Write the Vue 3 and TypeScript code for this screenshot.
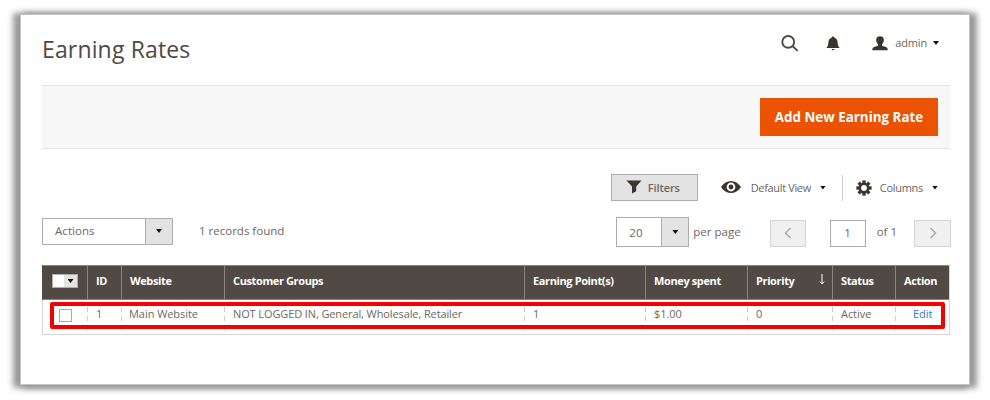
<script setup lang="ts">
interface Column {
  key: string
  label: string
  width: number
  sorted?: boolean
}

const columns: Column[] = [
  { key: 'id', label: 'ID', width: 34 },
  { key: 'website', label: 'Website', width: 103 },
  { key: 'groups', label: 'Customer Groups', width: 300 },
  { key: 'points', label: 'Earning Point(s)', width: 121 },
  { key: 'money', label: 'Money spent', width: 102 },
  { key: 'priority', label: 'Priority', width: 85, sorted: true },
  { key: 'status', label: 'Status', width: 63 },
  { key: 'action', label: 'Action', width: 54 },
]

const rows: Record<string, string>[] = [
  {
    id: '1',
    website: 'Main Website',
    groups: 'NOT LOGGED IN, General, Wholesale, Retailer',
    points: '1',
    money: '$1.00',
    priority: '0',
    status: 'Active',
    action: 'Edit',
  },
]
</script>

<template>
  <main class="panel">
    <header class="top">
      <h1>Earning Rates</h1>
      <div class="tools">
        <svg class="search" width="18" height="17" viewBox="0 0 18 17"><circle cx="7.2" cy="6.9" r="5.9" /><path d="M11.4 11L16.7 15.9" /></svg>
        <svg class="bell" width="14" height="15" viewBox="0 0 14 15"><path d="M7 .4C8 .4 8.4 1 8.4 1.7C10.9 2.4 11.6 4.5 11.7 7C11.8 9.2 12.2 10.2 13.6 12H.4C1.8 10.2 2.2 9.2 2.3 7C2.4 4.5 3.1 2.4 5.6 1.7C5.6 1 6 .4 7 .4ZM5.6 13H8.4C8.2 14.8 5.8 14.8 5.6 13Z" /></svg>
        <svg class="user" width="16" height="15" viewBox="0 0 16 15"><path d="M8 .3C10.9 .3 12 2 11.8 4.3C11.7 6.4 10.8 7.4 10 8.4V9.8L14 11.1Q15.8 11.7 15.8 14.2H.2Q.2 11.7 2 11.1L6 9.8V8.4C5.2 7.4 4.3 6.4 4.2 4.3C4 2 5.1 .3 8 .3Z" /></svg>
        <span class="admin">admin</span>
        <i class="caret"></i>
      </div>
    </header>

    <section class="page-actions">
      <button class="primary">Add New Earning Rate</button>
    </section>

    <section class="view-bar">
      <button class="filters">
        <svg width="16" height="14" viewBox="0 0 16 14"><path d="M.5 .5H15.5L10.2 6.5V11.3L6 13.5V6.5Z" /></svg>
        <span>Filters</span>
      </button>
      <svg class="eye" width="20" height="12" viewBox="0 0 20 12"><path fill-rule="evenodd" d="M0 6C5-2 15-2 20 6C15 14 5 14 0 6ZM10 1.6A4.4 4.4 0 1 0 10 10.4A4.4 4.4 0 1 0 10 1.6Z" /><circle cx="10" cy="6" r="2.4" /></svg>
      <span class="default-view">Default View</span>
      <i class="caret"></i>
      <span class="divider"></span>
      <svg class="gear" width="16" height="16" viewBox="-8 -8 16 16">
        <g><rect v-for="n in 4" :key="n" x="-1.7" y="-7.6" width="3.4" height="15.2" :transform="`rotate(${n * 45})`" /></g>
        <circle r="5.5" /><circle class="hole" r="2.9" />
      </svg>
      <span class="columns-label">Columns</span>
      <i class="caret"></i>
    </section>

    <section class="grid-bar">
      <div class="select mass"><span>Actions</span><b><i class="caret"></i></b></div>
      <span class="found">1 records found</span>
      <div class="select size"><span>20</span><b><i class="caret"></i></b></div>
      <span class="per-page">per page</span>
      <button class="nav prev"><svg width="8" height="12" viewBox="0 0 8 12"><path d="M6.5 1L1.5 6L6.5 11" /></svg></button>
      <div class="page-no">1</div>
      <span class="of">of 1</span>
      <button class="nav next"><svg width="8" height="12" viewBox="0 0 8 12"><path d="M1.5 1L6.5 6L1.5 11" /></svg></button>
    </section>

    <div class="table-wrap">
      <table>
        <colgroup>
          <col :style="{ width: '45px' }" />
          <col v-for="c in columns" :key="c.key" :style="{ width: c.width + 'px' }" />
        </colgroup>
        <thead>
          <tr>
            <th class="check"><div class="multi"><span></span><b><i class="caret"></i></b></div></th>
            <th v-for="c in columns" :key="c.key" :class="c.key">
              <div class="head"><span>{{ c.label }}</span>
                <svg v-if="c.sorted" width="6" height="11" viewBox="0 0 6 11"><path d="M3 0V10M.8 7.6L3 10L5.2 7.6" /></svg>
              </div>
            </th>
          </tr>
        </thead>
        <tbody>
          <tr v-for="row in rows" :key="row.id">
            <td class="check"><span class="box"></span></td>
            <td v-for="c in columns" :key="c.key" :class="c.key"><span>{{ row[c.key] }}</span></td>
          </tr>
        </tbody>
      </table>
      <div class="highlight"></div>
    </div>
  </main>
</template>

<style>
body { background: #fff; }
#app { display: flow-root; min-height: 400px; }
</style>

<style scoped>
* { box-sizing: border-box; }
.panel {
  width: 950px;
  height: 371px;
  margin: 14px 0 0 20px;
  padding: 0 19px 0 21px;
  border: 1px solid #c4c4c4;
  background: #fff;
  box-shadow: 5px 1px 6px 2px #999, -5px 1px 6px 2px #999;
  font-family: "Open Sans", "Noto Sans", sans-serif;
  font-size: 11px;
  color: #6d6763;
}
svg { display: block; flex: none; fill: #3b3530; }
button { font: inherit; color: inherit; padding: 0; border-radius: 0; }
span { white-space: nowrap; }
.caret {
  flex: none;
  display: block;
  width: 6px;
  height: 4px;
  background: #111;
  clip-path: polygon(0 0, 100% 0, 50% 100%);
}
.top { height: 70px; display: flex; justify-content: space-between; }
h1 { margin: 17px 0 0 0; font-size: 23px; line-height: 34px; font-weight: 400; letter-spacing: 0.15px; color: #514943; }
.tools { display: flex; align-items: center; height: 28px; margin: 14px 11px 0 0; }
.search { fill: none; stroke: #514943; stroke-width: 1.9; margin: 1px 27px 0 0; }
.bell { margin: 1px 32px 0 0; }
.user { margin-right: 7px; }
.admin { letter-spacing: -0.15px; margin: 0 6px 1px 0; }
.page-actions {
  height: 64px;
  display: flex;
  justify-content: flex-end;
  padding: 12px 12px 0 0;
  background: #f7f7f7;
  border: solid #e3e3e3;
  border-width: 1px 0;
}
.primary { width: 178px; height: 38px; padding-bottom: 1px; border: 0; background: #eb5202; color: #fff; font-size: 13.4px; font-weight: 700; }
.view-bar { height: 27px; margin-top: 25px; display: flex; align-items: center; justify-content: flex-end; padding-right: 12px; }
.filters {
  width: 87px;
  height: 27px;
  display: flex;
  align-items: center;
  padding: 0 0 1px 14px;
  gap: 6px;
  background: #e3e3e3;
  border: 1px solid #adadad;
  font-weight: 600;
  letter-spacing: -0.1px;
  margin-right: 23px;
}
.eye { margin: 0 10px 1px 0; }
.default-view { margin-right: 9px; letter-spacing: -0.35px; }
.divider { width: 1px; height: 26px; background: #ccc; margin: 0 13px 0 16px; }
.gear { margin-right: 8px; }
.hole { fill: #fff; }
.columns-label { margin-right: 9px; letter-spacing: -0.3px; }
.grid-bar { height: 28px; margin: 16px -1px 0 0; display: flex; align-items: center; font-size: 11.5px; }
.select { display: flex; border: 1px solid #adadad; background: #fff; }
.select span { flex: 1; padding-left: 12px; }
.select b { width: 27px; background: #e3e3e3; border-left: 1px solid #adadad; display: flex; align-items: center; justify-content: center; }
.mass { width: 131px; height: 27px; line-height: 24px; letter-spacing: 0.05px; }
.found { margin: 0 0 1px 26px; }
.size { width: 73px; height: 30px; margin: 2px 0 0 auto; line-height: 29px; }
.per-page { margin: 1px 0 0 4px; }
.nav { width: 37px; height: 27px; display: flex; align-items: center; justify-content: center; background: #f0f0f0; border: 1px solid #d4d4d4; margin-top: 5px; }
.nav svg { fill: none; stroke: #aaa; stroke-width: 1.5; margin-bottom: 2px; }
.prev { margin-left: 29px; width: 36px; }
.page-no { width: 36px; height: 27px; margin: 5px 0 0 24px; border: 1px solid #adadad; text-align: center; line-height: 24px; }
.of { margin-left: 11px; }
.next { margin-left: 17px; }
.table-wrap { position: relative; width: 908px; margin-top: 20px; }
table { width: 908px; table-layout: fixed; border-collapse: separate; border-spacing: 0; font-size: 11px; border: solid #d6d6d6; border-width: 0 1px 1px 0; }
th { height: 35px; padding: 0 0 4px 8px; background: #514943; color: #fff; font-weight: 700; letter-spacing: -0.38px; text-align: left; border: solid #8a837f; border-width: 1px 0 1px 1px; }
th:first-child { border-left-color: #514943; }
.head { display: flex; align-items: center; justify-content: space-between; line-height: 16px; padding-right: 7px; }
.head svg { fill: none; stroke: #fff; margin-bottom: 2px; }
.multi { display: flex; width: 26px; height: 14px; margin-top: 1px; margin-left: 1px; background: #fff; border: 1px solid #adadad; }
.multi span { flex: 1; }
.multi b { width: 13px; background: #e3e3e3; display: flex; align-items: center; justify-content: center; }
td { height: 34px; padding: 6px 0 0 9px; vertical-align: top; line-height: 15px; letter-spacing: -0.05px; background: repeating-linear-gradient(to bottom, #ccc 0 5px, transparent 5px 9px) 0 7px / 1px 27px no-repeat; }
td.groups { letter-spacing: -0.11px; }
td.website { padding-left: 8px; }
td.check { background: none; padding: 9px 0 0 16px; border-left: 1px solid #d6d6d6; }
.box { display: block; width: 13px; height: 13px; border: 1px solid #aaa; background: #fff; }
td.action { padding-left: 18px; color: #2b7bd0; }
.highlight { position: absolute; left: 8px; top: 37px; width: 895px; height: 27px; border: 4px solid #f40000; border-radius: 2px; }
</style>
